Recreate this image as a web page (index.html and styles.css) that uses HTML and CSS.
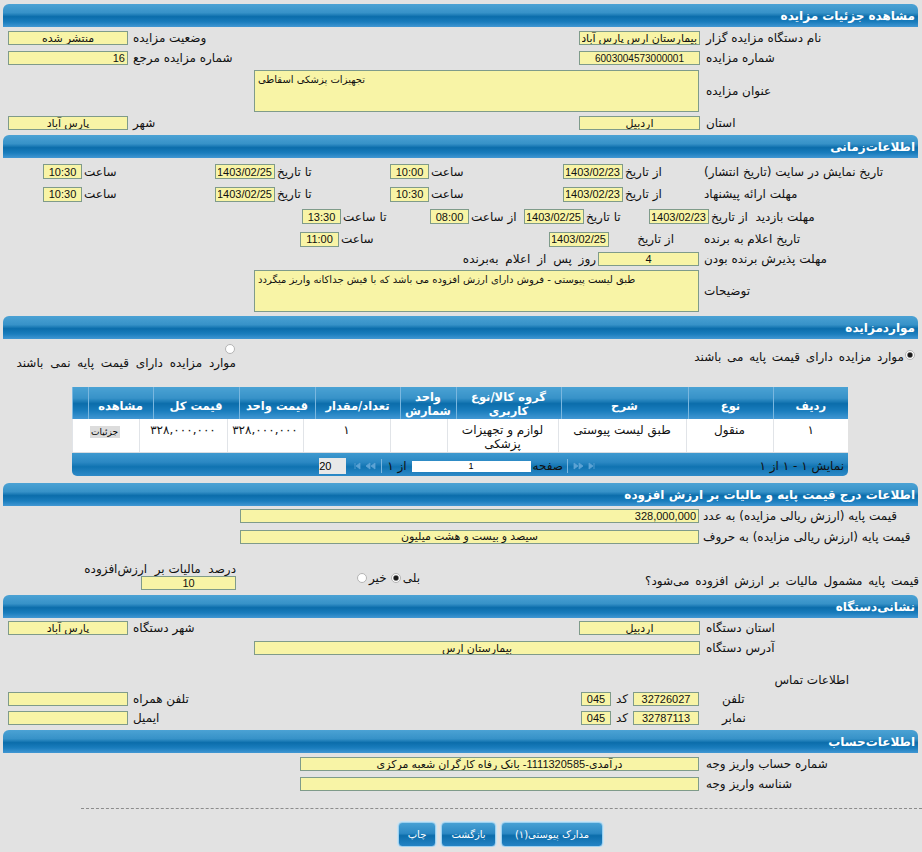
FILE: index.html
```html
<!DOCTYPE html>
<html lang="fa" dir="rtl">
<head>
  <meta charset="UTF-8">
  <title>مشاهده جزئیات مزایده</title>
  <link rel="stylesheet" href="styles.css">
</head>
<body>
<div id="page">

  <!-- مشخصات مزایده -->
  <div class="head">مشاهده جزئیات مزایده</div>
  <div class="sec sec-info">
    <div class="row h20">
      <div class="lbl wa">نام دستگاه مزایده گزار</div>
      <div class="cell wb"><input class="fld w121 mr5 c" value="بیمارستان ارس پارس آباد" readonly></div>
      <div class="lbl wc">وضعیت مزایده</div>
      <div class="cell wd"><input class="fld w120 mr4 c" value="منتشر شده" readonly></div>
    </div>
    <div class="row h20">
      <div class="lbl wa">شماره مزایده</div>
      <div class="cell wb"><input class="fld w121 mr5 c n10" value="6003004573000001" readonly></div>
      <div class="lbl wc">شماره مزایده مرجع</div>
      <div class="cell wd"><input class="fld w120 mr4" value="16" readonly></div>
    </div>
    <div class="row h45">
      <div class="lbl wa">عنوان مزایده</div>
      <div class="cell"><textarea class="fld area w445 mr6" readonly>تجهیزات پزشکی اسقاطی</textarea></div>
    </div>
    <div class="row h20">
      <div class="lbl wa">استان</div>
      <div class="cell wb"><input class="fld w121 mr5 c" value="اردبیل" readonly></div>
      <div class="lbl wc">شهر</div>
      <div class="cell wd"><input class="fld w120 mr4 c" value="پارس آباد" readonly></div>
    </div>
  </div>

  <!-- اطلاعات زمانی -->
  <div class="head">اطلاعات‌زمانی</div>
  <div class="sec sec-time">
    <div class="row h23">
      <div class="lbl tl">تاریخ نمایش در سایت (تاریخ انتشار)</div>
      <div class="cell tb"><span>از تاریخ</span><input class="fld dt" value="1403/02/23" readonly></div>
      <div class="cell tc"><span>ساعت</span><input class="fld tm" value="10:00" readonly></div>
      <div class="cell td"><span>تا تاریخ</span><input class="fld dt" value="1403/02/25" readonly></div>
      <div class="cell te"><span>ساعت</span><input class="fld tm" value="10:30" readonly></div>
    </div>
    <div class="row h22">
      <div class="lbl tl">مهلت ارائه پیشنهاد</div>
      <div class="cell tb"><span>از تاریخ</span><input class="fld dt" value="1403/02/23" readonly></div>
      <div class="cell tc"><span>ساعت</span><input class="fld tm" value="10:30" readonly></div>
      <div class="cell td"><span>تا تاریخ</span><input class="fld dt" value="1403/02/25" readonly></div>
      <div class="cell te"><span>ساعت</span><input class="fld tm" value="10:30" readonly></div>
    </div>
    <div class="row h23">
      <div class="cell v1"><span>مهلت بازدید&nbsp; از تاریخ</span><input class="fld dt" value="1403/02/23" readonly></div>
      <div class="cell v2"><span>تا تاریخ</span><input class="fld dt" value="1403/02/25" readonly></div>
      <div class="cell v3"><span>از ساعت</span><input class="fld tm" value="08:00" readonly></div>
      <div class="cell v4"><span>تا ساعت</span><input class="fld tm" value="13:30" readonly></div>
    </div>
    <div class="row h22">
      <div class="lbl tl">تاریخ اعلام به برنده</div>
      <div class="cell w1"><span>از تاریخ</span><input class="fld dt" value="1403/02/25" readonly></div>
      <div class="cell w2"><span>ساعت</span><input class="fld tm" value="11:00" readonly></div>
    </div>
    <div class="row h18">
      <div class="lbl tl">مهلت پذیرش برنده بودن</div>
      <div class="cell"><input class="fld w101 mr4 c" value="4" readonly><span class="mr2 ws">روز پس از اعلام به‌برنده</span></div>
    </div>
    <div class="row h46">
      <div class="lbl tl">توضیحات</div>
      <div class="cell"><textarea class="fld area w445 mr4" readonly>طبق لیست پیوستی - فروش دارای ارزش افزوده می باشد که با فیش جداکانه واریز میگردد</textarea></div>
    </div>
  </div>

  <!-- موارد مزایده -->
  <div class="head">مواردمزایده</div>
  <div class="sec sec-items">
    <div class="opts">
      <div class="opt opt1"><input type="radio" class="rd" name="base" checked><span>موارد مزایده دارای قیمت پایه می باشند</span></div>
      <div class="opt opt2"><input type="radio" class="rd" name="base"><span>موارد مزایده دارای قیمت پایه نمی باشند</span></div>
    </div>

    <div class="grid">
      <table class="g-head">
        <colgroup>
          <col style="width:75px"><col style="width:85px"><col style="width:127px"><col style="width:105px"><col style="width:56px">
          <col style="width:85px"><col style="width:76px"><col style="width:86px"><col style="width:65px"><col style="width:16px">
        </colgroup>
        <tr>
          <th>ردیف</th><th>نوع</th><th>شرح</th><th class="two">گروه کالا/نوع<br>کاربری</th><th class="two">واحد<br>شمارش</th>
          <th>تعداد/مقدار</th><th>قیمت واحد</th><th>قیمت کل</th><th>مشاهده</th><th></th>
        </tr>
      </table>
      <table class="g-body">
        <colgroup>
          <col style="width:75px"><col style="width:87px"><col style="width:128px"><col style="width:111px"><col style="width:57px">
          <col style="width:87px"><col style="width:76px"><col style="width:88px"><col style="width:67px">
        </colgroup>
        <tr>
          <td>۱</td><td>منقول</td><td>طبق لیست پیوستی</td><td>لوازم و تجهیزات پزشکی</td><td></td>
          <td>۱</td><td>۳۲۸,۰۰۰,۰۰۰</td><td>۳۲۸,۰۰۰,۰۰۰</td><td class="lft"><button class="small">جزئیات</button></td>
        </tr>
      </table>
      <div class="g-foot">
        <span class="info">نمایش ۱ - ۱ از ۱</span>
        <span class="nav">
          <svg width="26" height="8" viewBox="0 0 26 8"><path d="M1 1l4 3-4 3zM6 1l4 3-4 3zM16 1l4 3-4 3zM21 1v6" fill="#5da3d4" stroke="#5da3d4" stroke-width=".8"/></svg>
        </span>
        <span class="sep"></span>
        <span class="pg">صفحه</span>
        <input class="pgin" value="1" readonly>
        <span class="of">از ۱</span>
        <span class="sep"></span>
        <span class="nav">
          <svg width="26" height="8" viewBox="0 0 26 8"><path d="M5 1v6M10 1l-4 3 4 3zM20 1l-4 3 4 3zM25 1l-4 3 4 3z" fill="#5da3d4" stroke="#5da3d4" stroke-width=".8"/></svg>
        </span>
        <input class="rows" value="20" readonly>
      </div>
    </div>
  </div>

  <!-- قیمت پایه -->
  <div class="head">اطلاعات درج قیمت پایه و مالیات بر ارزش افزوده</div>
  <div class="sec sec-price">
    <div class="row h21">
      <div class="lbl pl">&nbsp;قیمت پایه (ارزش ریالی مزایده) به عدد</div>
      <div class="cell"><input class="fld w459 mr3" value="328,000,000" readonly></div>
    </div>
    <div class="row h20">
      <div class="lbl pl">قیمت پایه (ارزش ریالی مزایده) به حروف</div>
      <div class="cell"><input class="fld w459 mr3 c" value="سیصد و بیست و هشت میلیون" readonly></div>
    </div>
    <div class="row h46 bottom">
      <div class="q">قیمت پایه مشمول مالیات بر ارزش افزوده می‌شود؟</div>
      <div class="yn">
        <span>بلی</span><input type="radio" class="rd" name="vat" checked>
        <span>خیر</span><input type="radio" class="rd" name="vat">
      </div>
      <div class="pct">
        <span>درصد&nbsp; مالیات بر&nbsp; ارزش‌افزوده</span>
        <input class="fld w95 c" value="10" readonly>
      </div>
    </div>
  </div>

  <!-- نشانی دستگاه -->
  <div class="head">نشانی‌دستگاه</div>
  <div class="sec sec-addr">
    <div class="row h21">
      <div class="lbl wa">استان دستگاه</div>
      <div class="cell wb"><input class="fld w121 mr5 c" value="اردبیل" readonly></div>
      <div class="lbl wc">شهر دستگاه</div>
      <div class="cell wd"><input class="fld w120 mr4 c" value="پارس آباد" readonly></div>
    </div>
    <div class="row h19">
      <div class="lbl wa">آدرس دستگاه</div>
      <div class="cell"><input class="fld w446 mr5 c" value="بیمارستان ارس" readonly></div>
    </div>
    <div class="contact">اطلاعات تماس</div>
    <div class="row h19">
      <div class="lbl ca">تلفن</div>
      <div class="cell cb"><input class="fld w66 mr22 c" value="32726027" readonly><span class="mr5">کد</span><input class="fld w30 mr5 c" value="045" readonly></div>
      <div class="lbl wc">تلفن همراه</div>
      <div class="cell wd"><input class="fld w120 mr4" value="" readonly></div>
    </div>
    <div class="row h19">
      <div class="lbl ca">نمابر</div>
      <div class="cell cb"><input class="fld w66 mr22 c" value="32787113" readonly><span class="mr5">کد</span><input class="fld w30 mr5 c" value="045" readonly></div>
      <div class="lbl wc">ایمیل</div>
      <div class="cell wd"><input class="fld w120 mr4" value="" readonly></div>
    </div>
  </div>

  <!-- اطلاعات حساب -->
  <div class="head">اطلاعات‌حساب</div>
  <div class="sec sec-acc">
    <div class="row h21">
      <div class="lbl wa">شماره حساب واریز وجه</div>
      <div class="cell"><input class="fld w399 mr6 c" value="درآمدی-1111320585- بانک رفاه کارگران شعبه مرکزی" readonly></div>
    </div>
    <div class="row h19">
      <div class="lbl wa">شناسه واریز وجه</div>
      <div class="cell"><input class="fld w399 mr6" value="" readonly></div>
    </div>
  </div>

  <div class="dash"></div>

  <div class="buttons">
    <button class="btn b1">مدارک پیوستی(۱)</button>
    <button class="btn b2">بازگشت</button>
    <button class="btn b3">چاپ</button>
  </div>

</div>
</body>
</html>
```

FILE: styles.css
```css
* {
  margin: 0;
  padding: 0;
  box-sizing: border-box;
}

body {
  background: #e2e2e2;
  font-family: Tahoma, "DejaVu Sans", sans-serif;
  font-size: 12px;
  color: #111;
}

#page {
  width: 922px;
  padding-top: 4px;
}

/* section title bars */
.head {
  height: 23px;
  margin: 0 4px 0 3px;
  padding-right: 3px;
  border-radius: 6px 6px 0 0;
  background: linear-gradient(#4ba2d4 0%, #3792c8 38%, #0b6dab 55%, #1a7dbd 78%, #4197d3 100%);
  color: #fff;
  font-weight: bold;
  font-size: 12px;
  line-height: 25px;
  white-space: nowrap;
}

.sec-info { padding: 1px 0 2px; }
.sec-time { padding: 2px 21px 2px 0; }
.sec-items { padding-bottom: 7px; }
.sec-price { padding-bottom: 2px; }
.sec-addr { padding-bottom: 2px; }
.sec-acc { padding-top: 1px; }

.row {
  display: flex;
  align-items: center;
}
.row.bottom { align-items: flex-end; padding-bottom: 3px; }

.h18 { height: 18px; }
.h19 { height: 19px; }
.h20 { height: 20px; }
.h21 { height: 21px; }
.h22 { height: 22px; }
.h23 { height: 23px; }
.h45 { height: 45px; }
.h46 { height: 46px; }

.lbl {
  text-align: left;
  white-space: nowrap;
  padding-left: 1px;
}
.cell {
  display: flex;
  align-items: center;
  white-space: nowrap;
}
.ws { word-spacing: 3px; }

/* columns of the two-column forms */
.wa { width: 217px; }
.wb { width: 455px; }
.wc { width: 118px; }
.wd { width: 132px; }
.ca { width: 201px; }
.cb { width: 471px; }
.pl { width: 220px; }

/* date / time rows */
.tl { width: 198px; }
.tb, .tc, .td, .te, .v1, .v2, .v3, .v4, .w2 { justify-content: flex-end; gap: 2px; }
.tb { width: 140px; }
.tc { width: 173px; }
.td { width: 175px; }
.te { width: 172px; }
.v1 { width: 252px; }
.v2 { width: 125px; }
.v3 { width: 94px; }
.v4 { width: 128px; }
.w1 { width: 154px; justify-content: space-between; padding-right: 29px; }
.w2 { width: 249px; }

/* yellow read-only fields */
.fld {
  height: 14px;
  border: 1px solid #7f9b8a;
  background: #f8f4a6;
  font-family: "Liberation Sans", "DejaVu Sans", sans-serif;
  font-size: 11px;
  color: #111;
  padding: 0 2px;
  outline: none;
  direction: rtl;
}
.fld.c { text-align: center; }
.fld.n10 { font-size: 10px; }
.area {
  height: 42px;
  resize: none;
  padding: 2px 3px;
  line-height: 13px;
  overflow: hidden;
  direction: ltr;
  text-align: left;
  font-family: "DejaVu Sans", sans-serif;
  font-size: 10px;
}
.dt { width: 60px; height: 15px; text-align: center; }
.tm { width: 39px; height: 15px; text-align: center; }

.w30 { width: 30px; }
.w66 { width: 66px; }
.w95 { width: 95px; }
.w101 { width: 101px; }
.w120 { width: 120px; }
.w121 { width: 121px; }
.w399 { width: 399px; }
.w445 { width: 445px; }
.w446 { width: 446px; }
.w459 { width: 459px; }

.mr2 { margin-right: 2px; }
.mr3 { margin-right: 3px; }
.mr4 { margin-right: 4px; }
.mr5 { margin-right: 5px; }
.mr6 { margin-right: 6px; }
.mr22 { margin-right: 22px; }

/* radios */
.rd {
  appearance: none;
  -webkit-appearance: none;
  width: 10px;
  height: 10px;
  border: 1px solid #b4b4b4;
  border-radius: 50%;
  background: #fff;
  flex: none;
}
.rd:checked {
  background: radial-gradient(circle, #1a1a1a 0 2px, #8a8a8a 2.6px, #fff 3.4px);
}

.opts {
  display: flex;
  height: 48px;
}
.opt { white-space: nowrap; line-height: 16px; word-spacing: 2px; }
.opt1 {
  width: 686px;
  display: flex;
  align-items: flex-start;
  gap: 1px;
  padding: 10px 7px 0 0;
}
.opt1 .rd { margin-top: 1px; }
.opt2 {
  width: 222px;
  padding-top: 5px;
  word-spacing: 3px;
}
.opt2 .rd { display: block; margin-right: 1px; margin-bottom: 1px; }

/* items grid */
.grid {
  width: 776px;
  margin-right: 74px;
}
.grid table {
  width: 776px;
  table-layout: fixed;
  border-collapse: collapse;
}
.g-head th {
  height: 32px;
  padding-top: 5px;
  background: linear-gradient(#4ba2d4 0%, #3792c8 35%, #0b6dab 52%, #1a7dbd 75%, #4197d3 100%);
  color: #fff;
  font-size: 11.5px;
  line-height: 14px;
  font-weight: bold;
  border-left: 1px solid #7ab7df;
  white-space: nowrap;
  overflow: hidden;
}
.g-head th.two { padding-top: 1px; }
.g-body td {
  height: 33px;
  background: #fff;
  vertical-align: top;
  text-align: center;
  padding: 4px 2px 0;
  line-height: 14px;
  font-size: 12px;
  border-left: 1px solid #e1e4e8;
  border-bottom: 1px solid #d9dde2;
}
.g-body td.lft { text-align: left; padding-left: 17px; }
.small {
  border: none;
  background: #dcdcdc;
  font-family: Tahoma, "DejaVu Sans", sans-serif;
  font-size: 9px;
  height: 12px;
  width: 30px;
  line-height: 12px;
  margin-top: 3px;
}

.g-foot {
  height: 23px;
  display: flex;
  align-items: center;
  padding: 4px 4px 0 0;
  border-radius: 0 0 5px 5px;
  background: linear-gradient(#3e99cf 0%, #2b88c3 40%, #1073b1 60%, #2d8ac8 100%);
  font-size: 12px;
  color: #111;
  white-space: nowrap;
}
.g-foot .info { width: 243px; }
.g-foot .nav { display: flex; width: 30px; justify-content: center; }
.g-foot .sep {
  width: 1px;
  height: 14px;
  background: #7bb6de;
  margin: 0 3px;
}
.g-foot .pg { margin-right: 1px; }
.pgin {
  width: 119px;
  height: 11px;
  margin-right: 2px;
  border: none;
  background: #fff;
  font-size: 9px;
  text-align: center;
  font-family: "Liberation Sans", sans-serif;
}
.g-foot .of { margin: 0 5px 0 2px; }
.rows {
  width: 27px;
  height: 16px;
  margin-right: 2px;
  border: none;
  background: #e8e8e8;
  font-size: 11px;
  padding-right: 2px;
  text-align: left;
  direction: ltr;
  font-family: "Liberation Sans", sans-serif;
}

/* price section, last row */
.q {
  width: 492px;
  padding-right: 3px;
  margin-bottom: 2px;
  white-space: nowrap;
  word-spacing: 2px;
}
.yn {
  width: 180px;
  padding-right: 10px;
  display: flex;
  align-items: center;
  gap: 2px;
  height: 20px;
  margin-bottom: 2px;
}
.yn span + .rd { margin-left: 2px; }
.pct {
  width: 250px;
  padding-right: 14px;
  display: flex;
  flex-direction: column;
  align-items: flex-start;
  line-height: 14px;
  white-space: nowrap;
}

.contact {
  height: 19px;
  margin-top: 13px;
  padding-right: 73px;
  line-height: 19px;
}

.dash {
  margin: 14px 0 0 81px;
  border-top: 1px dashed #8c8c8c;
}

.buttons {
  display: flex;
  gap: 5px;
  padding-right: 319px;
  margin-top: 13px;
}
.btn {
  height: 25px;
  border: 1px solid #9dd0ef;
  border-radius: 4px;
  box-shadow: 0 0 0 1px #c9e4f4;
  background: linear-gradient(#47a0d4 0%, #2c89c4 45%, #0c6dab 55%, #2483c4 100%);
  color: #fff;
  font-family: Tahoma, "DejaVu Sans", sans-serif;
  font-size: 10px;
}
.b1 { width: 102px; }
.b2 { width: 55px; }
.b3 { width: 38px; }
```
